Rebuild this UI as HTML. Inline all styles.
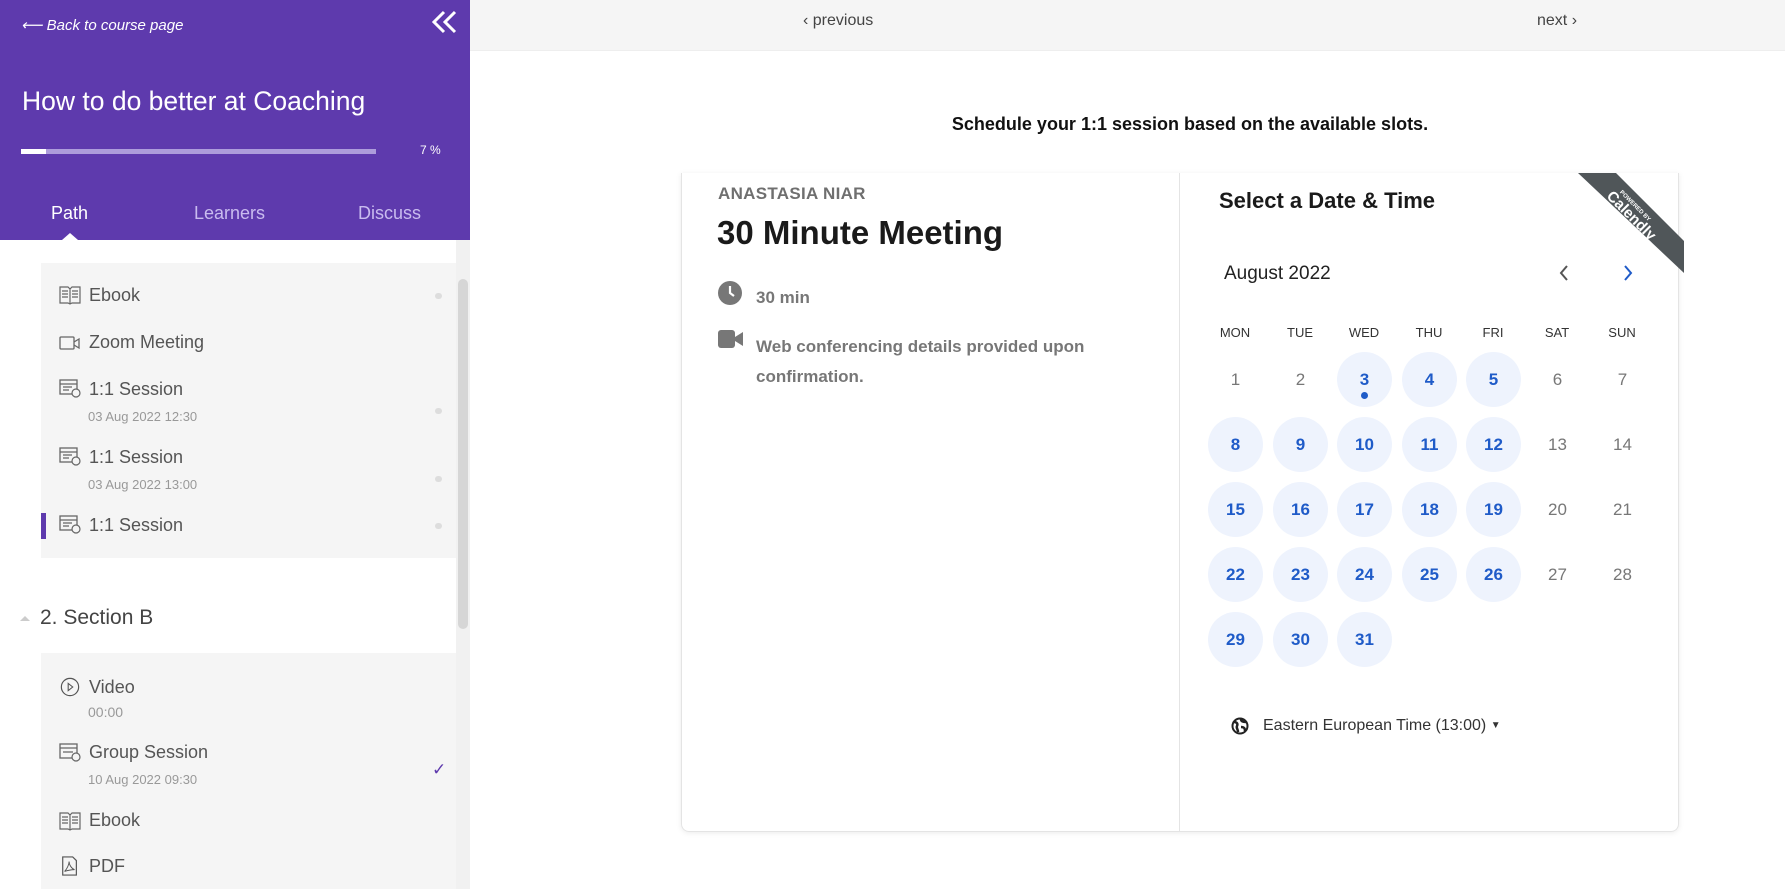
<!DOCTYPE html>
<html><head><meta charset="utf-8"><style>
*{margin:0;padding:0;box-sizing:border-box}
body{width:1785px;height:889px;overflow:hidden;background:#fff;font-family:"Liberation Sans",sans-serif;position:relative}
.a{position:absolute;white-space:nowrap}
.side{position:absolute;left:0;top:0;width:470px;height:889px;background:#fff}
.hdr{position:absolute;left:0;top:0;width:470px;height:240px;background:#5e3aad;color:#fff}
.box{position:absolute;left:41px;width:415px;background:#f5f5f5}
.it{position:absolute;left:89px;font-size:18px;color:#555}
.sub{position:absolute;left:88px;font-size:13px;color:#999}
.ic{position:absolute;left:59px;width:22px;height:20px}
.dot{position:absolute;left:435px;width:7px;height:6px;border-radius:3px;background:#ddd}
.d{position:absolute;width:55px;height:55px;margin:-27px 0 0 -27px;border-radius:50%;text-align:center;line-height:55px;font-size:17px;color:#777}
.d.b{background:#eef3fd;color:#1f5bc8;font-weight:bold}
.wh{position:absolute;font-size:13px;color:#333;transform:translateX(-50%)}
</style></head><body>
<div class="a" style="left:470px;top:0;width:1315px;height:51px;background:#f5f5f5;border-bottom:1px solid #eee"></div>
<div class="a" style="left:803px;top:12px;font-size:16px;color:#444">‹ previous</div>
<div class="a" style="left:1537px;top:12px;font-size:16px;color:#444">next ›</div>
<div class="a" style="left:0;width:2380px;top:114px;text-align:center;font-size:18px;font-weight:bold;color:#111">Schedule your 1:1 session based on the available slots.</div>

<div class="a" style="left:681px;top:173px;width:998px;height:659px;border:1px solid #e4e4e4;border-top:none;border-radius:0 0 8px 8px;box-shadow:0 1px 6px rgba(0,0,0,.08);overflow:hidden">
 <div class="a" style="left:497px;top:0;width:1px;height:659px;background:#e4e4e4"></div>
</div>
<svg class="a" style="left:1578px;top:173px" width="106" height="100" viewBox="0 0 106 100"><polygon points="0,0 38,0 106,68 106,100" fill="#505659"/><text x="0" y="0" transform="translate(56,34) rotate(45)" fill="#fff" font-family="Liberation Sans" font-weight="bold" font-size="6" text-anchor="middle">POWERED BY</text><text x="0" y="0" transform="translate(50,46) rotate(45)" fill="#fff" font-family="Liberation Sans" font-weight="bold" font-size="15" text-anchor="middle">Calendly</text></svg>
<div class="a" style="left:718px;top:184px;font-size:17px;font-weight:bold;color:#6f6f6f;letter-spacing:.3px">ANASTASIA NIAR</div>
<div class="a" style="left:717px;top:214px;font-size:33px;font-weight:bold;color:#1a1a1a">30 Minute Meeting</div>
<svg class="a" style="left:718px;top:281px" width="24" height="24" viewBox="0 0 24 24"><circle cx="12" cy="12" r="12" fill="#777"/><path d="M12 5v7l4 3" stroke="#fff" stroke-width="2.2" fill="none"/></svg>
<div class="a" style="left:756px;top:288px;font-size:17px;font-weight:bold;color:#777">30 min</div>
<svg class="a" style="left:718px;top:330px" width="25" height="18" viewBox="0 0 25 18"><rect x="0" y="0" width="17" height="18" rx="3" fill="#777"/><path d="M17 7l8-5v14l-8-5z" fill="#777"/></svg>
<div class="a" style="left:756px;top:332px;font-size:17px;font-weight:bold;color:#777;line-height:30px">Web conferencing details provided upon<br>confirmation.</div>

<div class="a" style="left:1219px;top:188px;font-size:22px;font-weight:bold;color:#1a1a1a">Select a Date &amp; Time</div>
<div class="a" style="left:1224px;top:263px;font-size:19px;color:#222">August 2022</div>
<svg class="a" style="left:1558px;top:264px" width="12" height="18" viewBox="0 0 12 18"><path d="M9 2L3 9l6 7" stroke="#555" stroke-width="2" fill="none"/></svg>
<svg class="a" style="left:1622px;top:264px" width="12" height="18" viewBox="0 0 12 18"><path d="M3 2l6 7-6 7" stroke="#1f5bc8" stroke-width="2" fill="none"/></svg>
<div class="wh" style="left:1235px;top:325px">MON</div><div class="wh" style="left:1300px;top:325px">TUE</div><div class="wh" style="left:1364px;top:325px">WED</div><div class="wh" style="left:1429px;top:325px">THU</div><div class="wh" style="left:1493px;top:325px">FRI</div><div class="wh" style="left:1557px;top:325px">SAT</div><div class="wh" style="left:1622px;top:325px">SUN</div>

<div class="d" style="left:1235px;top:379px">1</div><div class="d" style="left:1300px;top:379px">2</div><div class="d b" style="left:1364px;top:379px">3</div><div class="d b" style="left:1429px;top:379px">4</div><div class="d b" style="left:1493px;top:379px">5</div><div class="d" style="left:1557px;top:379px">6</div><div class="d" style="left:1622px;top:379px">7</div>
<div class="a" style="left:1361px;top:392px;width:7px;height:7px;border-radius:50%;background:#1f5bc8"></div>
<div class="d b" style="left:1235px;top:444px">8</div><div class="d b" style="left:1300px;top:444px">9</div><div class="d b" style="left:1364px;top:444px">10</div><div class="d b" style="left:1429px;top:444px">11</div><div class="d b" style="left:1493px;top:444px">12</div><div class="d" style="left:1557px;top:444px">13</div><div class="d" style="left:1622px;top:444px">14</div>
<div class="d b" style="left:1235px;top:509px">15</div><div class="d b" style="left:1300px;top:509px">16</div><div class="d b" style="left:1364px;top:509px">17</div><div class="d b" style="left:1429px;top:509px">18</div><div class="d b" style="left:1493px;top:509px">19</div><div class="d" style="left:1557px;top:509px">20</div><div class="d" style="left:1622px;top:509px">21</div>
<div class="d b" style="left:1235px;top:574px">22</div><div class="d b" style="left:1300px;top:574px">23</div><div class="d b" style="left:1364px;top:574px">24</div><div class="d b" style="left:1429px;top:574px">25</div><div class="d b" style="left:1493px;top:574px">26</div><div class="d" style="left:1557px;top:574px">27</div><div class="d" style="left:1622px;top:574px">28</div>
<div class="d b" style="left:1235px;top:639px">29</div><div class="d b" style="left:1300px;top:639px">30</div><div class="d b" style="left:1364px;top:639px">31</div>

<svg class="a" style="left:1231px;top:717px" width="18" height="18" viewBox="0 0 18 18"><circle cx="9" cy="9" r="7.5" fill="#fff" stroke="#222" stroke-width="2"/><path d="M3 5c3 0 4 2 3 4s1 3 1 6M10 2c0 2 2 3 5 3M10 10c3 0 4 1 4 4" stroke="#222" stroke-width="2.5" fill="none"/></svg>
<div class="a" style="left:1263px;top:717px;font-size:16px;color:#333">Eastern European Time (13:00) <span style="font-size:10px;vertical-align:2px">▼</span></div>

<div class="side">
 <div class="hdr">
  <div class="a" style="left:21px;top:16px;font-size:15px;font-style:italic">⟵ Back to course page</div>
  <svg class="a" style="left:432px;top:10px" width="26" height="26" viewBox="0 0 26 26"><path d="M12 2L2 12l10 10M23 2L13 12l10 10" stroke="#fff" stroke-width="3" fill="none"/></svg>
  <div class="a" style="left:22px;top:86px;font-size:26.5px">How to do better at Coaching</div>
  <div class="a" style="left:21px;top:149px;width:355px;height:5px;background:#ad9cdb"></div>
  <div class="a" style="left:21px;top:149px;width:25px;height:5px;background:#fff"></div>
  <div class="a" style="left:420px;top:143px;font-size:12px">7 %</div>
  <div class="a" style="left:51px;top:203px;font-size:18px">Path</div>
  <div class="a" style="left:194px;top:203px;font-size:18px;color:#c9bbef">Learners</div>
  <div class="a" style="left:358px;top:203px;font-size:18px;color:#c9bbef">Discuss</div>
  <div class="a" style="left:62px;top:233px;width:0;height:0;border-left:8px solid transparent;border-right:8px solid transparent;border-bottom:7px solid #fff"></div>
 </div>
 <div class="a" style="left:456px;top:240px;width:14px;height:649px;background:#f1f1f1"></div>
 <div class="a" style="left:458px;top:279px;width:10px;height:350px;border-radius:5px;background:#d6d6d6"></div>
 <div class="box" style="top:263px;height:295px"></div>
 <div class="a" style="left:41px;top:513px;width:5px;height:26px;background:#5e3aad"></div>
 <svg class="ic" style="top:285px" viewBox="0 0 22 20"><path d="M1 2h8l2 2 2-2h8v16h-8l-2 1-2-1H1z M11 4v15 M3 6h6M3 9h6M3 12h6M13 6h6M13 9h6M13 12h6" stroke="#666" stroke-width="1.2" fill="none"/></svg>
 <div class="it" style="top:285px">Ebook</div><div class="dot" style="top:293px"></div>
 <svg class="ic" style="top:333px" viewBox="0 0 22 20"><rect x="1" y="4" width="14" height="12" rx="1" stroke="#666" stroke-width="1.3" fill="none"/><path d="M15 9l5-3v9l-5-3" stroke="#666" stroke-width="1.3" fill="none"/></svg>
 <div class="it" style="top:332px">Zoom Meeting</div>
 <svg class="ic" style="top:378px" viewBox="0 0 22 20"><rect x="1" y="2" width="17" height="14" stroke="#666" stroke-width="1.3" fill="none"/><path d="M1 6h17M4 9h9M4 12h6" stroke="#666" stroke-width="1.3"/><circle cx="17" cy="15" r="4" fill="#f5f5f5" stroke="#666" stroke-width="1.2"/></svg>
 <div class="it" style="top:379px">1:1 Session</div><div class="sub" style="top:409px">03 Aug 2022 12:30</div><div class="dot" style="top:408px"></div>
 <svg class="ic" style="top:446px" viewBox="0 0 22 20"><rect x="1" y="2" width="17" height="14" stroke="#666" stroke-width="1.3" fill="none"/><path d="M1 6h17M4 9h9M4 12h6" stroke="#666" stroke-width="1.3"/><circle cx="17" cy="15" r="4" fill="#f5f5f5" stroke="#666" stroke-width="1.2"/></svg>
 <div class="it" style="top:447px">1:1 Session</div><div class="sub" style="top:477px">03 Aug 2022 13:00</div><div class="dot" style="top:476px"></div>
 <svg class="ic" style="top:514px" viewBox="0 0 22 20"><rect x="1" y="2" width="17" height="14" stroke="#666" stroke-width="1.3" fill="none"/><path d="M1 6h17M4 9h9M4 12h6" stroke="#666" stroke-width="1.3"/><circle cx="17" cy="15" r="4" fill="#f5f5f5" stroke="#666" stroke-width="1.2"/></svg>
 <div class="it" style="top:515px">1:1 Session</div><div class="dot" style="top:523px"></div>
 <div class="a" style="left:20px;top:616px;width:0;height:0;border-left:5px solid transparent;border-right:5px solid transparent;border-bottom:5px solid #ccc"></div>
 <div class="a" style="left:40px;top:606px;font-size:21px;color:#444">2. Section B</div>
 <div class="box" style="top:653px;height:236px"></div>
 <svg class="ic" style="top:677px" viewBox="0 0 22 22"><circle cx="11" cy="11" r="9.5" stroke="#555" stroke-width="1.3" fill="none"/><path d="M9 7l5 4-5 4z" stroke="#555" stroke-width="1.2" fill="none"/></svg>
 <div class="it" style="top:677px">Video</div><div class="sub" style="top:704px;font-size:14px">00:00</div>
 <svg class="ic" style="top:742px" viewBox="0 0 22 20"><rect x="1" y="2" width="17" height="14" stroke="#666" stroke-width="1.3" fill="none"/><path d="M1 6h17M4 10h10" stroke="#666" stroke-width="1.3"/><circle cx="17" cy="15" r="4" fill="#f5f5f5" stroke="#666" stroke-width="1.2"/></svg>
 <div class="it" style="top:742px">Group Session</div><div class="sub" style="top:772px">10 Aug 2022 09:30</div>
 <div class="a" style="left:432px;top:760px;font-size:17px;color:#5e3aad">✓</div>
 <svg class="ic" style="top:811px" viewBox="0 0 22 20"><path d="M1 2h8l2 2 2-2h8v16h-8l-2 1-2-1H1z M11 4v15 M3 6h6M3 9h6M3 12h6M13 6h6M13 9h6M13 12h6" stroke="#666" stroke-width="1.2" fill="none"/></svg>
 <div class="it" style="top:810px">Ebook</div>
 <svg class="ic" style="top:856px" viewBox="0 0 22 22"><path d="M3 1h11l4 4v16H3z" stroke="#555" stroke-width="1.3" fill="none"/><path d="M5 17c3-3 5-8 5-11 0 4 3 8 6 9-4 0-8 1-11 2" stroke="#555" stroke-width="1" fill="none"/></svg>
 <div class="it" style="top:856px">PDF</div>
</div>
</body></html>
